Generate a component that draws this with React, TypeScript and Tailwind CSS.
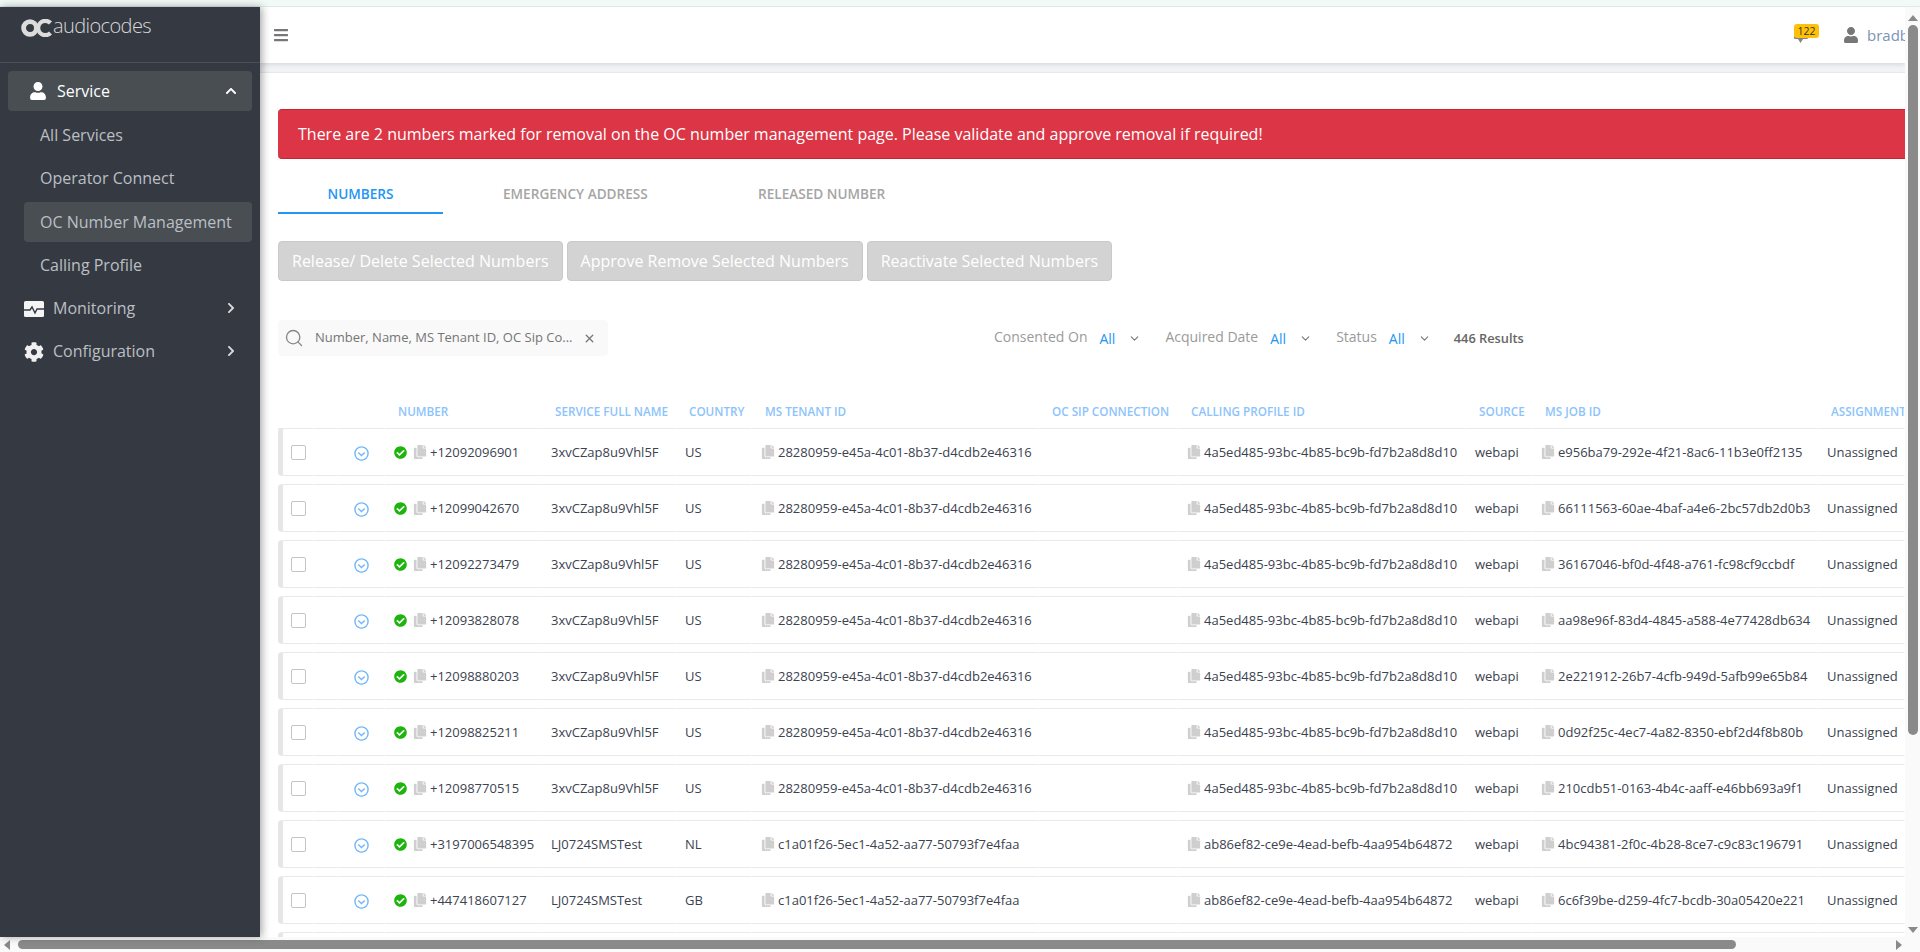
import { ChevronDown, Search, X } from "lucide-react";
import {
  FaBars,
  FaCheckCircle,
  FaChevronRight,
  FaChevronUp,
  FaCog,
  FaCopy,
  FaUser,
} from "react-icons/fa";

const rows = [
  ["+12092096901", "3xvCZap8u9Vhl5F", "US", "28280959-e45a-4c01-8b37-d4cdb2e46316", "4a5ed485-93bc-4b85-bc9b-fd7b2a8d8d10", "e956ba79-292e-4f21-8ac6-11b3e0ff2135"],
  ["+12099042670", "3xvCZap8u9Vhl5F", "US", "28280959-e45a-4c01-8b37-d4cdb2e46316", "4a5ed485-93bc-4b85-bc9b-fd7b2a8d8d10", "66111563-60ae-4baf-a4e6-2bc57db2d0b3"],
  ["+12092273479", "3xvCZap8u9Vhl5F", "US", "28280959-e45a-4c01-8b37-d4cdb2e46316", "4a5ed485-93bc-4b85-bc9b-fd7b2a8d8d10", "36167046-bf0d-4f48-a761-fc98cf9ccbdf"],
  ["+12093828078", "3xvCZap8u9Vhl5F", "US", "28280959-e45a-4c01-8b37-d4cdb2e46316", "4a5ed485-93bc-4b85-bc9b-fd7b2a8d8d10", "aa98e96f-83d4-4845-a588-4e77428db634"],
  ["+12098880203", "3xvCZap8u9Vhl5F", "US", "28280959-e45a-4c01-8b37-d4cdb2e46316", "4a5ed485-93bc-4b85-bc9b-fd7b2a8d8d10", "2e221912-26b7-4cfb-949d-5afb99e65b84"],
  ["+12098825211", "3xvCZap8u9Vhl5F", "US", "28280959-e45a-4c01-8b37-d4cdb2e46316", "4a5ed485-93bc-4b85-bc9b-fd7b2a8d8d10", "0d92f25c-4ec7-4a82-8350-ebf2d4f8b80b"],
  ["+12098770515", "3xvCZap8u9Vhl5F", "US", "28280959-e45a-4c01-8b37-d4cdb2e46316", "4a5ed485-93bc-4b85-bc9b-fd7b2a8d8d10", "210cdb51-0163-4b4c-aaff-e46bb693a9f1"],
  ["+3197006548395", "LJ0724SMSTest", "NL", "c1a01f26-5ec1-4a52-aa77-50793f7e4faa", "ab86ef82-ce9e-4ead-befb-4aa954b64872", "4bc94381-2f0c-4b28-8ce7-c9c83c196791"],
  ["+447418607127", "LJ0724SMSTest", "GB", "c1a01f26-5ec1-4a52-aa77-50793f7e4faa", "ab86ef82-ce9e-4ead-befb-4aa954b64872", "6c6f39be-d259-4fc7-bcdb-30a05420e221"],
];

const gridCols = "grid grid-cols-[36px_24px_47px_157px_134px_76px_287px_139px_288px_66px_286px_87px]";
const cellBase = "border-y border-r border-y-[#e9e9e9] border-r-white flex items-center pt-px h-12 whitespace-nowrap";
const cellLine = `${cellBase} pl-[9px]`;

function Copy() {
  return <FaCopy className="text-[#cfcfcf] text-[14px] shrink-0 mr-[3px] -mt-px" />;
}

function Checkbox() {
  return <div className="w-[15px] h-[15px] rounded-[2px] border border-[#c4c4c4] bg-white" />;
}

function Expand() {
  return (
    <svg viewBox="0 0 15 15" className="w-[15px] h-[15px] mt-[2px]" fill="none" stroke="#74b8f8" strokeWidth="1.4">
      <circle cx="7.5" cy="7.5" r="6.6" />
      <path d="M4.2 6.4 7.5 9.6l3.3-3.2" />
    </svg>
  );
}

function Filter({ label, gap }: { label: string; gap: string }) {
  return (
    <div className={`flex items-center text-[14px] ${gap}`}>
      <span className="text-[#9a9a9a] -mt-[3px]">{label}</span>
      <span className="text-[#2196f3] ml-3 font-medium mt-px">All</span>
      <ChevronDown className="w-[13px] h-[13px] text-[#777] ml-[13px]" />
    </div>
  );
}

function HeaderCell({ children }: { children?: React.ReactNode }) {
  return (
    <div className="pl-[13px] pt-[12px] h-[46px] flex items-center border-b border-[#e9e9e9] border-r border-r-white text-[11.7px] font-semibold text-[#8cc3fb] whitespace-nowrap overflow-hidden">
      {children}
    </div>
  );
}

function SideItem({ label, active }: { label: string; active?: boolean }) {
  return (
    <div className={`h-10 ml-6 mr-2 pl-4 flex items-center rounded text-[16px] text-[#bbbfc4] ${active ? "bg-[#494e53]" : ""}`}>
      {label}
    </div>
  );
}

export default function App() {
  return (
    <div className="h-[952px] w-[1920px] overflow-hidden flex flex-col bg-white font-['Open_Sans',sans-serif]">
      <div className="h-[6px] bg-[#f2faf8] border-b border-[#dfeae8] box-content shrink-0" />

      <div className="flex flex-1 min-h-0">
        <div className="flex-1 min-w-0 flex flex-col">
          <div className="flex flex-1 min-h-0">
            {/* Sidebar */}
            <aside className="w-[260px] shrink-0 bg-[#353a42] z-10 shadow-[2px_0_8px_rgba(0,0,0,0.35)] flex flex-col">
              <div className="h-[56px] border-b border-[#4b5057] pl-[21px] pt-[12px] flex items-start gap-[1px] text-[#dcdcdc]">
                <svg viewBox="0 0 31 18" className="w-[31px] h-[18px]" fill="none" stroke="currentColor">
                  <circle cx="9" cy="9" r="6.4" strokeWidth="4.8" />
                  <path d="M29.5 4 A7.2 7.2 0 1 0 29.5 14" strokeWidth="4.2" />
                </svg>
                <span className="text-[20px] leading-[24px] font-light tracking-[-0.6px] text-[#d8d8d8] -mt-[5px]">audiocodes</span>
              </div>
              <div className="pt-2 flex flex-col gap-[3.5px]">
                <div className="h-10 mx-2 rounded bg-[#494e53] flex items-center pl-[21px] pr-[15px] text-white text-[16px] font-medium">
                  <FaUser className="text-[18px] mr-[10px]" />
                  <span className="flex-1">Service</span>
                  <FaChevronUp className="text-[12px]" />
                </div>
                <SideItem label="All Services" />
                <SideItem label="Operator Connect" />
                <SideItem label="OC Number Management" active />
                <SideItem label="Calling Profile" />
                <div className="h-10 ml-6 mr-2 -mt-px flex items-center pr-[15px] text-[16px] text-[#bbbfc4]">
                  <svg viewBox="0 0 20 16" className="w-5 h-4 mr-[9px] mt-[2px]">
                    <rect width="20" height="16" rx="1.5" fill="#f4f4f4" />
                    <path d="M0 9h6l2-3 3 6 2-4h7" fill="none" stroke="#353a42" strokeWidth="1.4" />
                  </svg>
                  <span className="flex-1">Monitoring</span>
                  <FaChevronRight className="text-[12px] text-[#d8d8d8]" />
                </div>
                <div className="h-10 ml-6 mr-2 flex items-center pr-[15px] text-[16px] text-[#bbbfc4]">
                  <FaCog className="text-[20px] text-[#f0f0f0] mr-[9px] mt-[2px]" />
                  <span className="flex-1">Configuration</span>
                  <FaChevronRight className="text-[12px] text-[#d8d8d8]" />
                </div>
              </div>
            </aside>

            {/* Main */}
            <main className="flex-1 min-w-0 overflow-hidden flex flex-col">
              <header className="h-[56px] shrink-0 bg-white shadow-[0_2px_4px_rgba(0,0,0,0.1)] flex items-center pl-[13px] relative">
                <FaBars className="text-[16px] text-[#777]" />
                <div className="ml-auto flex items-center">
                  <div className="relative w-[25px] h-6 mr-[24px] mt-[2px]">
                    <svg viewBox="0 0 14 8" className="absolute left-0 top-[12px] w-[14px] h-[8px]" fill="#848484">
                      <rect width="14" height="3" rx="1" />
                      <path d="M4 3h5L6.5 7z" />
                    </svg>
                    <div className="absolute left-0 top-0 w-[25px] h-[14px] rounded-[3px] bg-[#ffc107] text-[10.5px] leading-[14px] text-center text-[#333]">122</div>
                  </div>
                  <FaUser className="text-[16px] text-[#777] mr-2" />
                  <span className="w-[38px] overflow-hidden text-[15px] text-[#7c93b5]">bradb</span>
                </div>
              </header>
              <div className="h-[10px] shrink-0 bg-[#f1f3f7] border-b border-[#e6e8ec]" />

              <div className="pl-[18px] pt-[36px]">
                <div className="h-[50px] bg-[#dc3545] border-y border-[#c82333] rounded-l flex items-center pl-5 text-white text-[16px]">
                  There are 2 numbers marked for removal on the OC number management page. Please validate and approve removal if required!
                </div>

                <div className="flex mt-[17px] h-[38px] text-[13.6px] font-semibold text-[#a5a5a5]">
                  <div className="w-[165px] border-b-2 border-[#2196f3] text-[#2196f3] text-center leading-[36px]">NUMBERS</div>
                  <div className="w-[315px] pl-[60px] leading-[36px] whitespace-nowrap">EMERGENCY ADDRESS</div>
                  <div className="leading-[36px] whitespace-nowrap">RELEASED NUMBER</div>
                </div>

                <div className="flex gap-1 mt-[27px]">
                  {["Release/ Delete Selected Numbers", "Approve Remove Selected Numbers", "Reactivate Selected Numbers"].map((b) => (
                    <div key={b} className="h-10 px-[13px] rounded bg-[#d3d3d3] border border-[#c9c9c9] text-white text-[16px] font-medium flex items-center whitespace-nowrap">
                      {b}
                    </div>
                  ))}
                </div>

                <div className="flex items-center mt-[39px] h-9">
                  <div className="w-[330px] h-9 rounded bg-[#f9f9f9] flex items-center pl-[6px] text-[13px] text-[#757575]">
                    <Search className="w-5 h-5 text-[#888] mr-[11px]" strokeWidth={1.6} />
                    <span className="w-[268px] whitespace-nowrap">Number, Name, MS Tenant ID, OC Sip Co...</span>
                    <X className="w-[13px] h-[13px] text-[#777]" strokeWidth={2.5} />
                  </div>
                  <Filter label="Consented On" gap="ml-[386px]" />
                  <Filter label="Acquired Date" gap="ml-[24px]" />
                  <Filter label="Status" gap="ml-[24px]" />
                  <span className="ml-[23px] mt-px text-[12.8px] font-semibold text-[#666]">446 Results</span>
                </div>

                <div className="mt-[27px] w-[1627px] text-[13px] text-[#3b4350]">
                  <div className={gridCols}>
                    <HeaderCell />
                    <HeaderCell />
                    <HeaderCell />
                    <HeaderCell>NUMBER</HeaderCell>
                    <HeaderCell>SERVICE FULL NAME</HeaderCell>
                    <HeaderCell>COUNTRY</HeaderCell>
                    <HeaderCell>MS TENANT ID</HeaderCell>
                    <HeaderCell>OC SIP CONNECTION</HeaderCell>
                    <HeaderCell>CALLING PROFILE ID</HeaderCell>
                    <HeaderCell>SOURCE</HeaderCell>
                    <HeaderCell>MS JOB ID</HeaderCell>
                    <HeaderCell>ASSIGNMENT</HeaderCell>
                  </div>
                  <div className="flex flex-col gap-2 -mt-px">
                    {[...rows, ["", "", "", "", "", ""]].map((r, i) => (
                      <div key={i} className={gridCols}>
                        <div className={`${cellBase} border-l-[5px] border-l-[#e6e6e6] rounded-l pl-2`}>
                          {r[0] && <Checkbox />}
                        </div>
                        <div className={cellLine} />
                        <div className={`${cellBase} justify-center`}>
                          {r[0] && <Expand />}
                        </div>
                        <div className={cellLine}>
                          {r[0] && <FaCheckCircle className="text-[13px] text-[#1cb50c] mr-[6px] shrink-0 -mt-px" />}
                          {r[0] && <Copy />}
                          {r[0]}
                        </div>
                        <div className={cellLine}>{r[1]}</div>
                        <div className={cellLine}>{r[2]}</div>
                        <div className={cellLine}>{r[0] && <Copy />}{r[3]}</div>
                        <div className={cellLine} />
                        <div className={cellLine}>{r[0] && <Copy />}{r[4]}</div>
                        <div className={cellLine}>{r[0] && "webapi"}</div>
                        <div className={cellLine}>{r[0] && <Copy />}{r[5]}</div>
                        <div className={cellLine}>{r[0] && "Unassigned"}</div>
                      </div>
                    ))}
                  </div>
                </div>
              </div>
            </main>
          </div>
        </div>

        {/* Page scrollbar */}
        <div className="w-[15px] shrink-0 bg-[#fafafa] flex flex-col items-center pt-2 pb-1">
          <div className="w-0 h-0 border-x-[5px] border-x-transparent border-b-[6px] border-b-[#8a8a8a]" />
          <div className="w-[10px] h-[710px] rounded-full bg-[#8a8a8a] mt-[4px] ml-[1px]" />
          <div className="mt-auto w-0 h-0 border-x-[5px] border-x-transparent border-t-[6px] border-t-[#8a8a8a]" />
        </div>
      </div>

      <div className="h-[15px] shrink-0 bg-[#fafafa] flex items-center pl-[4px] pr-[18px]">
        <div className="w-0 h-0 border-y-[5px] border-y-transparent border-r-[6px] border-r-[#8a8a8a]" />
        <div className="w-[1718px] h-[9px] rounded-full bg-[#8a8a8a] ml-[8px]" />
        <div className="ml-auto w-0 h-0 border-y-[5px] border-y-transparent border-l-[6px] border-l-[#8a8a8a]" />
      </div>
    </div>
  );
}
